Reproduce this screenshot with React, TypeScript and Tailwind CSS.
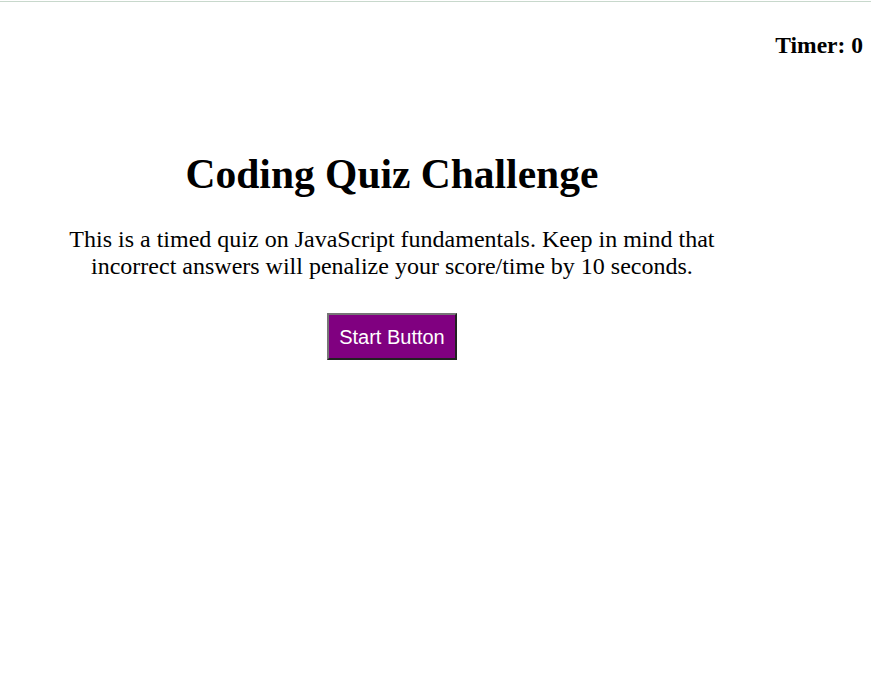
export default function App() {
  return (
    <div className="min-h-[693px] w-full bg-white font-['Liberation_Serif',serif] text-black">
      <div className="h-[1px]" />
      <div className="h-[1px] bg-[#c8d8cc]" />
      <header className="flex justify-end pr-2 pt-[29px]">
        <h3 className="text-[23.5px] font-bold leading-[28px]">Timer: 0</h3>
      </header>
      <main className="flex w-[90%] flex-col items-center text-center">
        <h1 className="mt-[91px] text-[41.5px] font-bold leading-[48px]">Coding Quiz Challenge</h1>
        <p className="mt-[28px] w-[690px] text-[24px] leading-[27px]">
          This is a timed quiz on JavaScript fundamentals. Keep in mind that incorrect answers will penalize your score/time by 10 seconds.
        </p>
        <button className="mt-[33px] h-[47px] w-[130px] border-2 border-[#767676] bg-[#800080] font-['Liberation_Sans',sans-serif] text-[20px] text-white [border-style:outset]">
          Start Button
        </button>
      </main>
    </div>
  );
}
